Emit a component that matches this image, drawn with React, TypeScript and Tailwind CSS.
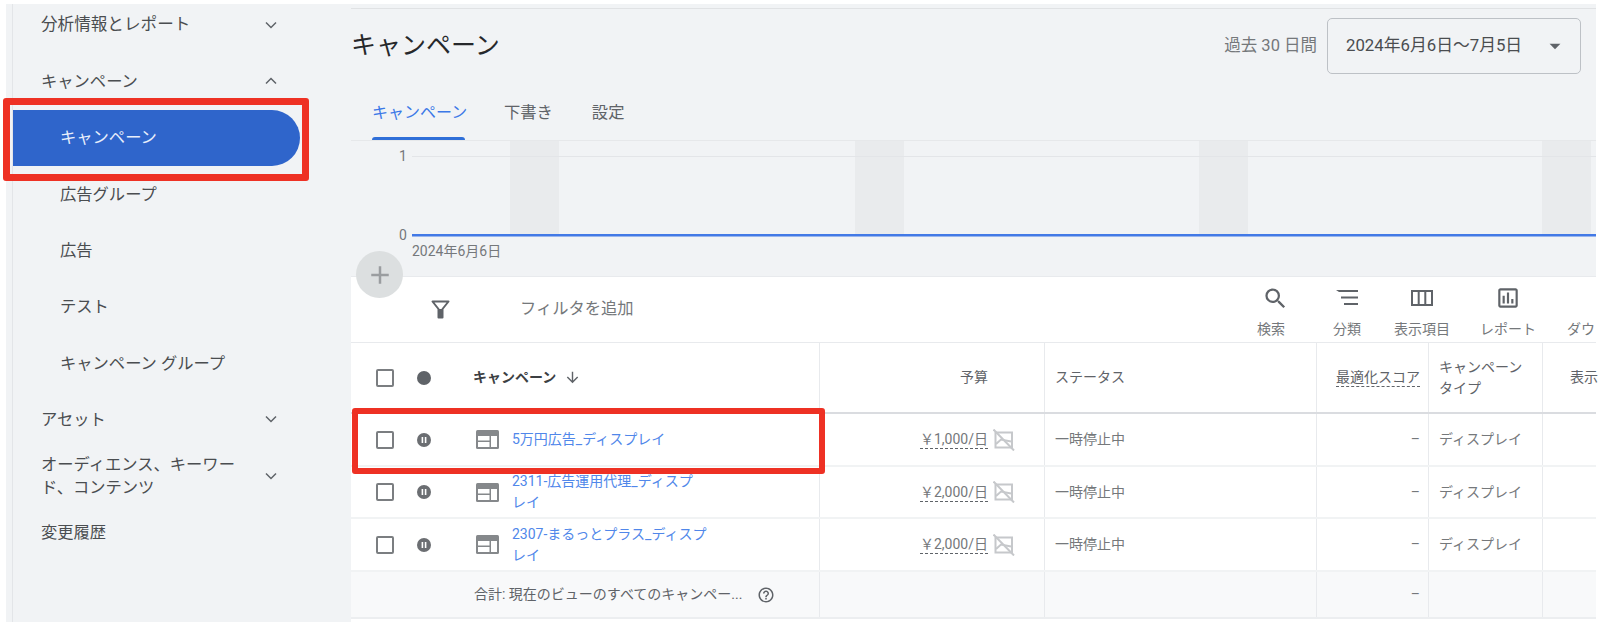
import React from "react";
import { MdSearch, MdOutlineAssessment, MdArrowDownward, MdHelpOutline, MdAdd, MdArrowDropDown } from "react-icons/md";

const Chevron = ({ up = false }: { up?: boolean }) => (
  <svg width="12" height="8" viewBox="0 0 12 8" className="shrink-0" fill="none" stroke="#5f6368" strokeWidth="1.5">
    {up ? <path d="M1 6.5 6 1.5l5 5" /> : <path d="M1 1.5l5 5 5-5" />}
  </svg>
);

const NavItem = ({ label, up, down }: { label: React.ReactNode; up?: boolean; down?: boolean }) => (
  <div className="h-14 pl-[28px] pr-[74px] flex items-center justify-between text-[16.3px] leading-[23px] text-[#4a4d50]">
    <span className="w-[205px]">{label}</span>
    {down && <Chevron />}
    {up && <Chevron up />}
  </div>
);

const SubItem = ({ label }: { label: string }) => (
  <div className="h-14 pl-[47px] flex items-center text-[16.3px] text-[#4a4d50]">{label}</div>
);

const Box = () => <div className="w-[18px] h-[18px] border-2 border-[#7b7e81] rounded-[2px] bg-white shrink-0" />;

const Pause = () => (
  <svg width="14" height="14" viewBox="0 0 14 14" className="shrink-0">
    <circle cx="7" cy="7" r="7" fill="#6b6e72" />
    <rect x="4.6" y="4" width="1.6" height="6" fill="#fff" />
    <rect x="7.8" y="4" width="1.6" height="6" fill="#fff" />
  </svg>
);

const CampaignIcon = () => (
  <svg width="23" height="19" viewBox="0 0 23 19" className="shrink-0">
    <rect width="23" height="19" rx="1.5" fill="#85888b" />
    <rect x="2" y="6" width="11.5" height="4.5" fill="#fff" />
    <rect x="2" y="12" width="11.5" height="5" fill="#fff" />
    <rect x="15" y="6" width="6" height="11" fill="#fff" />
  </svg>
);

const NoChart = () => (
  <svg width="22" height="22" viewBox="0 0 22 22" fill="none" stroke="#c6c8cb" strokeWidth="2" className="shrink-0">
    <rect x="2.5" y="3.5" width="16.5" height="15" />
    <path d="M0.5 0.5 21 21.5" />
    <path d="M3 15l5-4.5 10 2" />
  </svg>
);

const Dashed = ({ children }: { children: React.ReactNode }) => (
  <span className="border-b border-dashed border-[#5f6368] leading-[18px] whitespace-nowrap">{children}</span>
);

const Tool = ({ icon, label, w }: { icon: React.ReactNode; label: string; w: string }) => (
  <div className={`${w} flex flex-col items-center shrink-0`}>
    <div className="h-[28px] flex items-center justify-center">{icon}</div>
    <div className="mt-[8px] text-[14px] leading-[18px] text-[#75787b] whitespace-nowrap">{label}</div>
  </div>
);

const cols = "grid grid-cols-[469px_225px_272px_112px_114px_1fr]";
const cell = "border-r border-[#e8eaed] flex items-center";

const rows = [
  { h: "h-[53px]", name: <>5万円広告_ディスプレイ</>, budget: "￥1,000/日" },
  { h: "h-[52px]", name: <>2311-広告運用代理_ディスプ<br />レイ</>, budget: "￥2,000/日" },
  { h: "h-[53px]", name: <>2307-まるっとプラス_ディスプ<br />レイ</>, budget: "￥2,000/日" },
];

export default function App() {
  return (
    <div className="relative w-[1600px] h-[624px] overflow-hidden bg-white pt-[4px] pb-[2px] pl-[6px] pr-[4px] flex font-['Roboto','Noto_Sans_CJK_JP',sans-serif]">
      {/* sidebar */}
      <aside className="w-[345px] shrink-0 bg-[#f1f3f5] pl-[6px]">
        <div className="h-full border-l border-[#e3e5e8]">
          <div className="h-[42px] pl-[28px] pr-[74px] flex items-center justify-between text-[16.6px] text-[#4a4d50] mb-[7px]">
            <span>分析情報とレポート</span>
            <Chevron />
          </div>
          <NavItem label="キャンペーン" up />
          <div className="mt-[1px] mb-[1px] h-14 w-[287px] bg-[#2f65cb] rounded-r-[28px] pl-[47px] flex items-center text-[16.3px] text-[#e8eefb]">キャンペーン</div>
          <SubItem label="広告グループ" />
          <SubItem label="広告" />
          <SubItem label="テスト" />
          <div className="mt-[1px] mb-[-1px]"><SubItem label="キャンペーン グループ" /></div>
          <NavItem label="アセット" down />
          <div className="mt-[1px]"><NavItem label={<>オーディエンス、キーワー<br />ド、コンテンツ</>} down /></div>
          <NavItem label="変更履歴" />
        </div>
      </aside>

      {/* main */}
      <main className="flex-1 min-w-0 bg-[#f1f3f5] flex flex-col">
        <div className="mt-[4px] border-t border-[#e0e2e4] h-[133px] shrink-0 flex flex-col">
          <div className="h-[71px] flex pl-0 pt-[9px]">
            <h1 className="text-[25px] leading-[56px] font-normal text-[#26282b]">キャンペーン</h1>
            <div className="ml-auto flex items-center h-[56px] pr-[15px]">
              <span className="text-[16.5px] text-[#75787b] mr-[10px] whitespace-nowrap">過去 30 日間</span>
              <div className="w-[254px] h-[56px] border border-[#bdc1c6] rounded-[5px] pl-[18px] pr-[12px] flex items-center justify-between text-[16.8px] text-[#4a4d50]">
                <span className="whitespace-nowrap">2024年6月6日～7月5日</span>
                <MdArrowDropDown size={26} color="#5f6368" />
              </div>
            </div>
          </div>
          <div className="flex-1 border-b border-[#e6e8ea] flex pl-[21px] text-[16.3px]">
            <div className="w-[93px] flex flex-col justify-end text-[#3b78e7]">
              <span className="text-[16px] leading-[22px] mb-[13px] whitespace-nowrap">キャンペーン</span>
              <div className="h-[3px] bg-[#2f6fd8] rounded-t-[3px]" />
            </div>
            <div className="ml-[39px] flex flex-col justify-end text-[#5f6368]"><span className="leading-[22px] mb-[16px]">下書き</span></div>
            <div className="ml-[39px] flex flex-col justify-end text-[#5f6368]"><span className="leading-[22px] mb-[16px]">設定</span></div>
          </div>
        </div>

        {/* chart */}
        <div className="relative h-[135px] shrink-0 text-[#75787b]">
          <svg width="1245" height="135" viewBox="0 0 1245 135" className="block">
            <rect x="159" y="0" width="49" height="94" fill="#e9ebed" />
            <rect x="504" y="0" width="49" height="94" fill="#e9ebed" />
            <rect x="848" y="0" width="49" height="94" fill="#e9ebed" />
            <rect x="1191" y="0" width="49" height="94" fill="#e9ebed" />
            <line x1="61" y1="15.5" x2="1245" y2="15.5" stroke="#e3e5e8" />
            <rect x="61" y="93" width="1184" height="2.5" fill="#4279e6" />
          </svg>
          <span className="absolute left-[48px] top-[6px] text-[14px] leading-[18px]">1</span>
          <span className="absolute left-[48px] top-[85px] text-[14px] leading-[18px]">0</span>
          <span className="absolute left-[61px] top-[101px] text-[14px] leading-[18px] whitespace-nowrap">2024年6月6日</span>
        </div>

        {/* table */}
        <div className="flex-1 min-h-0 bg-white">
          <div className="h-[67px] border-y border-[#e8eaed] flex items-start">
            <div className="w-[101px] h-full flex items-center justify-end shrink-0 pr-[2px]">
              <svg width="19" height="19" viewBox="0 0 19 19" fill="none">
                <path d="M1.5 1.5h16l-6 7.5v8.5h-4V9z" stroke="#5f6368" strokeWidth="2" strokeLinejoin="round" />
                <path d="M7.5 9h4v8.5h-4z" fill="#5f6368" />
              </svg>
            </div>
            <div className="ml-[68px] h-full flex items-center text-[16.3px] text-[#75787b]">フィルタを追加</div>
            <div className="ml-auto flex pt-[7px]">
              <Tool w="w-[60px]" icon={<MdSearch size={27} color="#5f6368" className="ml-[8px]" />} label="検索" />
              <Tool w="w-[60px] ml-[16px]" icon={
                <svg width="22" height="16" viewBox="0 0 22 16" fill="#5f6368"><path d="M0 0h22v2H3z" /><rect x="5" y="6.5" width="17" height="2" /><rect x="8" y="13" width="14" height="2" /></svg>
              } label="分類" />
              <Tool w="w-[80px] ml-[5px]" icon={
                <svg width="22" height="16" viewBox="0 0 22 16" fill="none" stroke="#5f6368" strokeWidth="2"><rect x="1" y="1" width="20" height="14" /><path d="M7.7 1v14M14.3 1v14" /></svg>
              } label="表示項目" />
              <Tool w="w-[80px] ml-[6px]" icon={<MdOutlineAssessment size={26} color="#5f6368" />} label="レポート" />
              <div className="ml-[19px] w-[29px] shrink-0"><div className="mt-[36px] text-[14px] leading-[18px] text-[#75787b] whitespace-nowrap">ダウ</div></div>
            </div>
          </div>

          {/* header */}
          <div className={`${cols} h-[71px] border-b-2 border-[#dadce0] text-[14px] text-[#5f6368]`}>
            <div className={`${cell} pl-[25px]`}>
              <Box />
              <div className="ml-[23px] w-[14px] h-[14px] rounded-full bg-[#5f6368] shrink-0" />
              <span className="ml-[42px] font-bold text-[#3c4043]">キャンペーン</span>
              <MdArrowDownward size={17} color="#5f6368" className="ml-[8px]" />
            </div>
            <div className={`${cell} justify-end pr-[56px]`}>予算</div>
            <div className={`${cell} pl-[10px]`}>ステータス</div>
            <div className={`${cell} justify-end pr-[8px]`}><Dashed>最適化スコア</Dashed></div>
            <div className={`${cell} pl-[10px] leading-[21px]`}>キャンペーン<br />タイプ</div>
            <div className="flex items-center pl-[27px] whitespace-nowrap">表示</div>
          </div>

          {/* rows */}
          {rows.map((r, i) => (
            <div key={i} className={`${cols} ${r.h} border-b-2 border-[#f1f3f4] text-[14px] text-[#75787b]`}>
              <div className={`${cell} pl-[25px]`}>
                <Box />
                <div className="ml-[23px]"><Pause /></div>
                <div className="ml-[45px]"><CampaignIcon /></div>
                <div className="ml-[13px] text-[#5087ea] leading-[21px] whitespace-nowrap">{r.name}</div>
              </div>
              <div className={`${cell} justify-end pr-[29px]`}>
                <Dashed>{r.budget}</Dashed>
                <div className="ml-[5px]"><NoChart /></div>
              </div>
              <div className={`${cell} pl-[10px]`}>一時停止中</div>
              <div className={`${cell} justify-end pr-[8px]`}>–</div>
              <div className={`${cell} pl-[10px]`}>ディスプレイ</div>
              <div />
            </div>
          ))}

          {/* total */}
          <div className={`${cols} h-[47px] border-b-2 border-[#eceef0] bg-[#f8f9fa] text-[14px] text-[#75787b]`}>
            <div className={`${cell} pl-[123px]`}>
              <span className="whitespace-nowrap text-[#5f6368]">合計: 現在のビューのすべてのキャンペー...</span>
              <MdHelpOutline size={18} color="#5f6368" className="ml-[15px]" />
            </div>
            <div className={cell} />
            <div className={cell} />
            <div className={`${cell} justify-end pr-[8px]`}>–</div>
            <div className={cell} />
            <div />
          </div>
        </div>
      </main>

      {/* overlays */}
      <div className="absolute left-[356px] top-[251px] w-[47px] h-[47px] rounded-full bg-[#dcdfe0] flex items-center justify-center">
        <MdAdd size={30} color="#9a9da0" />
      </div>
      <div className="absolute left-[3px] top-[98px] w-[306px] h-[83px] border-[7px] border-[#ee3124] rounded-[3px]" />
      <div className="absolute left-[352px] top-[408px] w-[473px] h-[66px] border-[6px] border-[#ee3124] rounded-[3px]" />
    </div>
  );
}
